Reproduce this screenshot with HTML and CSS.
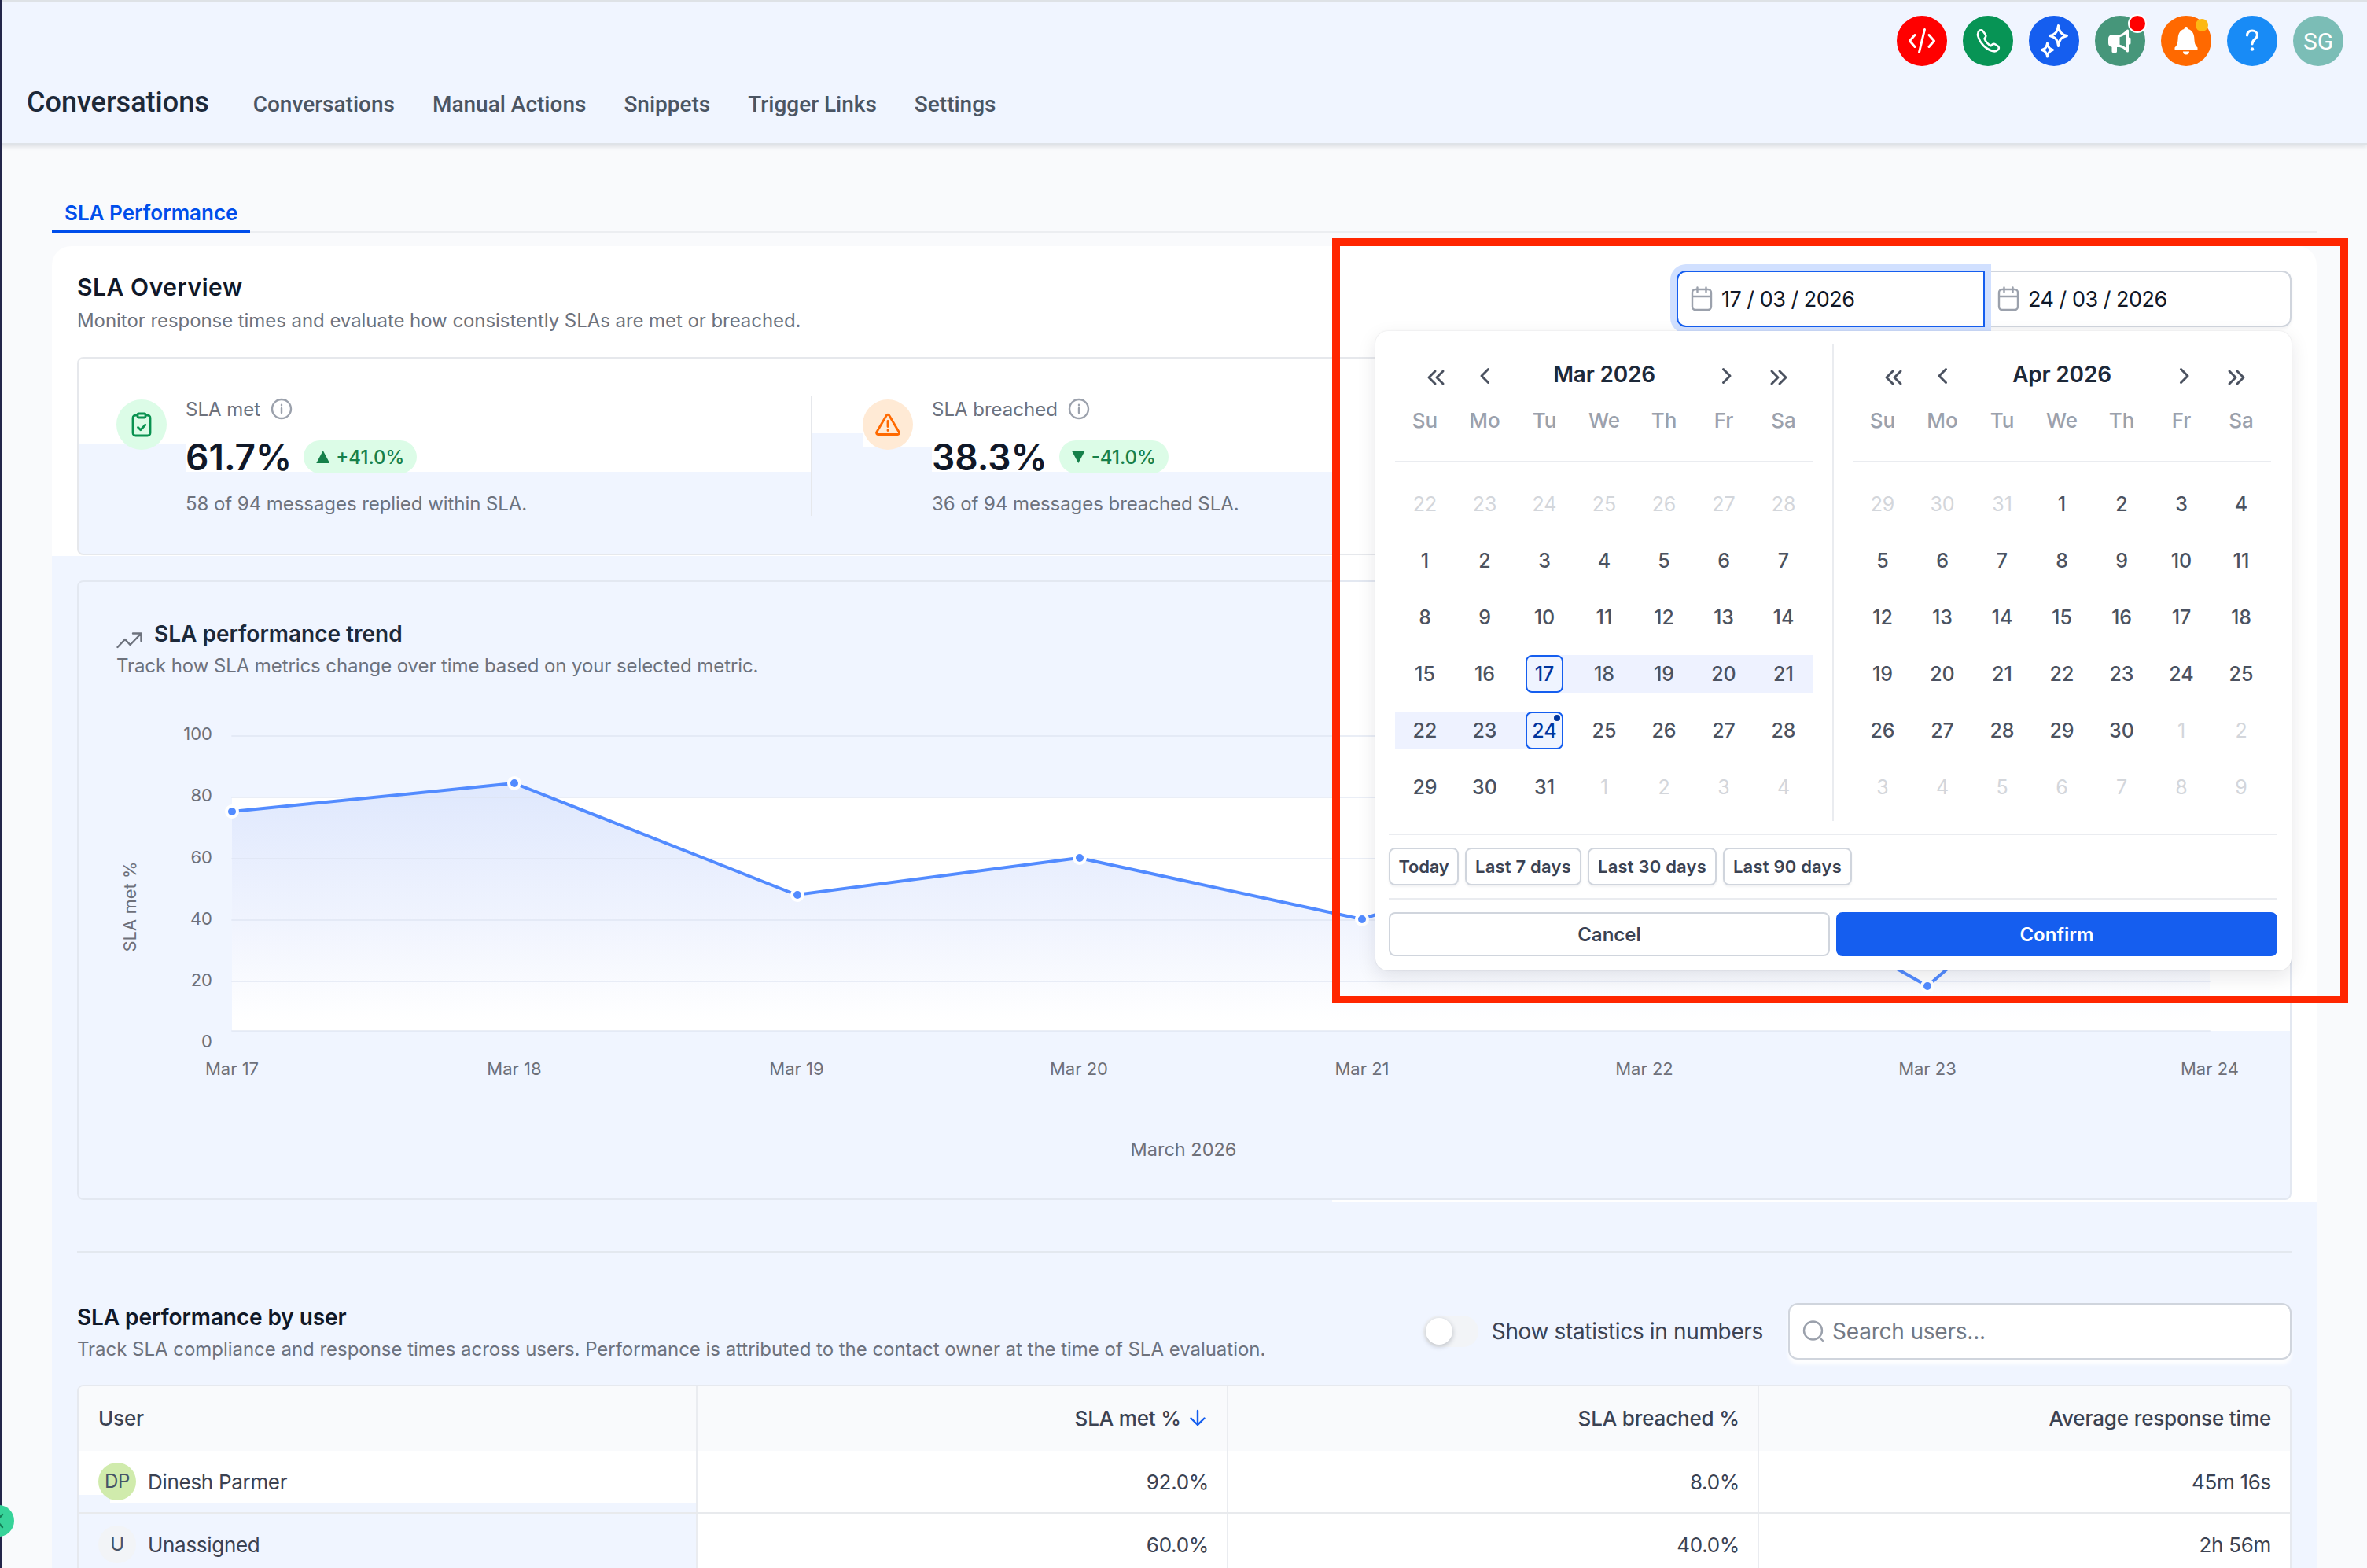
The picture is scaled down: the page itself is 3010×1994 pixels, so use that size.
FILE: index.html
```html
<!DOCTYPE html>
<html lang="en">
<head>
    <meta charset="UTF-8">
    <meta name="viewport" content="width=device-width, initial-scale=1.0">
    <title>Conversations - SLA Performance</title>
    <link rel="stylesheet" href="styles.css">
</head>
<body>
    <header class="header">
        <div class="topbar">
            <span class="round red">
                <svg width="36" height="36" viewBox="0 0 36 36"><path d="M9 10.500L2.500 18l6.500 7.500M27 10.500l6.500 7.500-6.500 7.500M21.500 3.500l-7 29"/></svg>
            </span>
            <span class="round green">
                <svg width="32" height="32" viewBox="0 0 32 32"><path d="M9.500 3.500c-1-1.500-3-1.800-4.500-.5-2 1.700-2.500 4-1.500 7.500 2.500 8.500 9.500 16 18.500 18.500 3 .8 5.500 0 7-2 1.300-1.500 1-3.300-.5-4.500l-3-2c-1.500-1-3-.8-4.200.3l-1.600 1.500c-4-2-6.500-5-8.200-9l1-1.500c1-1.200 1-2.600.2-4z" stroke-width="2.600"/></svg>
            </span>
            <span class="round blue">
                <svg width="38" height="44" viewBox="0 0 38 44"><path d="M24.500 2.500c1 8 4 11.500 11 13-7 1.500-10 5-11 13-1-8-4-11.500-11-13 7-1.500 10-5 11-13zM10.500 25c.7 5 2.800 7.500 7 8.500-4.200 1-6.300 3.500-7 8.500-.7-5-2.800-7.500-7-8.500 4.200-1 6.300-3.500 7-8.500z"/></svg>
            </span>
            <span class="round teal">
                <svg width="32" height="32" viewBox="0 0 32 32"><path d="M6 9.500h8v13h-3.500v7H7v-7H6a3.500 3.500 0 0 1-3.500-3.500v-6A3.500 3.500 0 0 1 6 9.500z" fill="#fff"/><path d="M14 10c5-1 8.500-3.500 11.500-7v26c-3-4-6.500-6-11.500-7M28 13v6"/></svg>
                <i class="badge badge-red"></i>
            </span>
            <span class="round orange">
                <svg width="34" height="40" viewBox="0 0 34 40"><path class="solid" d="M17 2a2.500 2.500 0 0 1 2.500 3c5 1.300 7.500 5.500 7.800 11 .3 6 .8 9.500 4.200 12.500V31h-29v-2.500c3.400-3 3.900-6.500 4.200-12.500.3-5.500 2.800-9.700 7.800-11A2.500 2.500 0 0 1 17 2zM13 33.500h8a4 4 0 0 1-8 0z"/></svg>
                <i class="badge badge-yellow"></i>
            </span>
            <span class="round sky">
                <svg width="24" height="32" viewBox="0 0 24 32"><path d="M5.500 9c.3-3.800 2.900-6 6.500-6s6.500 2.300 6.500 5.800c0 5-6.500 5-6.500 11" stroke-width="3.200"/><circle class="solid" cx="12" cy="26.500" r="2.200"/></svg>
            </span>
            <span class="round avatar">SG</span>
        </div>
        <nav class="nav">
            <h1>Conversations</h1>
            <a>Conversations</a>
            <a>Manual Actions</a>
            <a>Snippets</a>
            <a>Trigger Links</a>
            <a>Settings</a>
        </nav>
    </header>

    <main class="main">
        <div class="tabs"><span class="tab">SLA Performance</span></div>

        <section class="panel">
            <div class="overview-head">
                <div>
                    <h2>SLA Overview</h2>
                    <p class="desc">Monitor response times and evaluate how consistently SLAs are met or breached.</p>
                </div>
                <div class="date-range">
                    <div class="date-input focused">
                        <svg width="28" height="32" viewBox="0 0 28 32"><path d="M2 13h24M8.500 1.500v6M19.500 1.500v6M6 4h16a4 4 0 0 1 4 4v18a4 4 0 0 1-4 4H6a4 4 0 0 1-4-4V8a4 4 0 0 1 4-4z"/></svg>
                        <span>17 / 03 / 2026</span>
                    </div>
                    <div class="date-input">
                        <svg width="28" height="32" viewBox="0 0 28 32"><path d="M2 13h24M8.500 1.500v6M19.500 1.500v6M6 4h16a4 4 0 0 1 4 4v18a4 4 0 0 1-4 4H6a4 4 0 0 1-4-4V8a4 4 0 0 1 4-4z"/></svg>
                        <span>24 / 03 / 2026</span>
                    </div>
                </div>
            </div>

            <div class="stats">
                <div class="stat">
                    <span class="stat-icon met">
                        <svg width="28" height="32" viewBox="0 0 28 32"><path d="M9 4H6.500A3.500 3.500 0 0 0 3 7.500v19A3.500 3.500 0 0 0 6.500 30h15a3.500 3.500 0 0 0 3.500-3.500v-19A3.500 3.500 0 0 0 21.500 4H19M10.500 2h7A1.500 1.500 0 0 1 19 3.500v2A1.500 1.500 0 0 1 17.500 7h-7A1.500 1.500 0 0 1 9 5.500v-2A1.500 1.500 0 0 1 10.500 2zM9.500 19.500l3.300 3.300 6-6.600"/></svg>
                    </span>
                    <div class="stat-body">
                        <div class="stat-label">SLA met <svg class="info" width="28" height="28" viewBox="0 0 28 28"><circle cx="14" cy="14" r="12"/><path d="M14 13v6M14 8.800v.4"/></svg></div>
                        <div class="stat-value">61.7% <span class="pill"><i class="up"></i>+41.0%</span></div>
                        <div class="desc">58 of 94 messages replied within SLA.</div>
                    </div>
                </div>
                <div class="stat breached-stat">
                    <span class="stat-icon breached">
                        <svg width="34" height="32" viewBox="0 0 34 32"><path d="M15.300 4.200L2.800 25.500A2 2 0 0 0 4.500 28.500h25a2 2 0 0 0 1.700-3L18.700 4.200a2 2 0 0 0-3.400 0zM17 11.500v7M17 23v.5"/></svg>
                    </span>
                    <div class="stat-body">
                        <div class="stat-label">SLA breached <svg class="info" width="28" height="28" viewBox="0 0 28 28"><circle cx="14" cy="14" r="12"/><path d="M14 13v6M14 8.800v.4"/></svg></div>
                        <div class="stat-value">38.3% <span class="pill"><i class="down"></i>-41.0%</span></div>
                        <div class="desc">36 of 94 messages breached SLA.</div>
                    </div>
                </div>
            </div>

            <div class="chart-card">
                <div class="chart-title">
                    <svg width="34" height="22" viewBox="0 0 34 22"><path d="M1.500 20L11 10l6.500 7L31 3M21 2.500h10.500V12"/></svg>
                    <h3>SLA performance trend</h3>
                </div>
                <p class="desc">Track how SLA metrics change over time based on your selected metric.</p>
                <svg class="chart" width="2812" height="659" viewBox="100 865 2812 659">
                    <defs>
                        <linearGradient id="area" x1="0" y1="996" x2="0" y2="1300" gradientUnits="userSpaceOnUse">
                            <stop offset="0" stop-color="#dfe8fd"/>
                            <stop offset="0.55" stop-color="#eff3fe"/>
                            <stop offset="1" stop-color="#ffffff"/>
                        </linearGradient>
                    </defs>
                    <rect class="plot-bg" x="295" y="1014" width="2617" height="297"/>
                    <path fill="url(#area)" d="M295 1032L654 996L1013 1138L1372 1091L1732 1169L2091 1049L2451 1254L2810 942V1311H295z"/>
                    <path class="grid" d="M295 936H2810M295 1014H2810M295 1092H2810M295 1170H2810M295 1248H2810M295 1311H2810"/>
                    <path class="line" d="M295 1032L654 996L1013 1138L1372 1091L1732 1169L2091 1049L2451 1254L2810 942"/>
                    <g class="points">
                        <circle cx="295" cy="1032" r="7"/>
                        <circle cx="654" cy="996" r="7"/>
                        <circle cx="1014" cy="1138" r="7"/>
                        <circle cx="1373" cy="1091" r="7"/>
                        <circle cx="1732" cy="1169" r="7"/>
                        <circle cx="2091" cy="1049" r="7"/>
                        <circle cx="2451" cy="1254" r="7"/>
                    </g>
                    <g class="ylabels">
                        <text x="270" y="941">100</text>
                        <text x="270" y="1019">80</text>
                        <text x="270" y="1098">60</text>
                        <text x="270" y="1176">40</text>
                        <text x="270" y="1254">20</text>
                        <text x="270" y="1332">0</text>
                    </g>
                    <g class="xlabels">
                        <text x="295" y="1367">Mar 17</text>
                        <text x="654" y="1367">Mar 18</text>
                        <text x="1013" y="1367">Mar 19</text>
                        <text x="1372" y="1367">Mar 20</text>
                        <text x="1732" y="1367">Mar 21</text>
                        <text x="2091" y="1367">Mar 22</text>
                        <text x="2451" y="1367">Mar 23</text>
                        <text x="2810" y="1367">Mar 24</text>
                        <text class="axis-title" x="1505" y="1470">March 2026</text>
                        <text transform="translate(173 1153) rotate(-90)">SLA met %</text>
                    </g>
                </svg>
            </div>

            <hr class="divider">

            <div class="users-head">
                <div>
                    <h3>SLA performance by user</h3>
                    <p class="desc">Track SLA compliance and response times across users. Performance is attributed to the contact owner at the time of SLA evaluation.</p>
                </div>
                <div class="users-tools">
                    <span class="toggle"></span>
                    <span class="toggle-label">Show statistics in numbers</span>
                    <div class="search">
                        <svg width="28" height="28" viewBox="0 0 28 28"><circle cx="13.500" cy="13" r="11.500"/><path d="M21.500 21.500l4.500 4.500"/></svg>
                        <span>Search users...</span>
                    </div>
                </div>
            </div>

            <div class="table">
                <div class="row head">
                    <div>User</div>
                    <div>SLA met % <svg width="22" height="22" viewBox="0 0 22 22"><path d="M11 2v18M2.500 11.500L11 20l8.500-8.500"/></svg></div>
                    <div>SLA breached %</div>
                    <div>Average response time</div>
                </div>
                <div class="row first">
                    <div><span class="user-avatar dp">DP</span>Dinesh Parmer</div>
                    <div>92.0%</div>
                    <div>8.0%</div>
                    <div>45m 16s</div>
                </div>
                <div class="row second">
                    <div><span class="user-avatar">U</span>Unassigned</div>
                    <div>60.0%</div>
                    <div>40.0%</div>
                    <div>2h 56m</div>
                </div>
            </div>
        </section>
    </main>

    <div class="picker">
        <div class="months">
            <div class="month" data-title="Mar 2026" data-prev="22-28" data-days="31" data-next="4"></div>
            <div class="month" data-title="Apr 2026" data-prev="29-31" data-days="30" data-next="9"></div>
        </div>
        <div class="shortcuts">
            <span class="today">Today</span>
            <span class="week">Last 7 days</span>
            <span>Last 30 days</span>
            <span>Last 90 days</span>
        </div>
        <div class="actions">
            <span class="cancel">Cancel</span>
            <span class="confirm">Confirm</span>
        </div>
    </div>

    <div class="highlight"></div>
    <div class="side-line"></div>
    <div class="side-handle"><svg width="8" height="24" viewBox="0 0 8 24"><path d="M-4 12l7-8M-4 12l7 8"/></svg></div>

    <script>
        const weekdays = ['Su', 'Mo', 'Tu', 'We', 'Th', 'Fr', 'Sa'];

        function icon(cls, d) {
            return `<svg class="${cls}" width="28" height="24" viewBox="0 0 28 24"><path d="${d}"/></svg>`;
        }

        function dayCell(day, cls) {
            return `<div class="day ${cls}"><span>${day}</span></div>`;
        }

        document.querySelectorAll('.month').forEach((month, index) => {
            const data = month.dataset;
            const [from, to] = data.prev.split('-').map(Number);
            let days = '';

            for (let d = from; d <= to; d++) days += dayCell(d, 'muted');
            for (let d = 1; d <= Number(data.days); d++) {
                let cls = '';
                if (index === 0) {
                    if (d === 17) cls = 'start';
                    if (d === 24) cls = 'end';
                    if (d > 17 && d < 24) cls = 'in-range';
                }
                days += dayCell(d, cls);
            }
            for (let d = 1; d <= Number(data.next); d++) days += dayCell(d, 'muted');

            month.innerHTML = `
                <div class="month-head">
                    ${icon('fast-prev', 'M13 4l-8 8 8 8M23 4l-8 8 8 8')}
                    ${icon('prev', 'M18.500 3.500L10 12l8.500 8.500')}
                    <b>${data.title}</b>
                    ${icon('next', 'M9.500 3.500L18 12l-8.500 8.500')}
                    ${icon('fast-next', 'M5 4l8 8-8 8M15 4l8 8-8 8')}
                </div>
                <div class="weekdays">${weekdays.map(w => `<span>${w}</span>`).join('')}</div>
                <div class="days">${days}</div>
            `;
        });
    </script>
</body>
</html>
```
FILE: styles.css
```css
:root {
    --tint: #f0f5ff;
    --page: #f9fafc;
    --border: #e6e8ec;
    --text: #101828;
    --text-mid: #3b4252;
    --text-light: #6d727d;
    --icon: #9ba1ac;
    --primary: #155eef;
    --success: #16804a;
}
* {
    box-sizing: border-box;
}
body {
    margin: 0;
    height: 1994px;
    overflow: hidden;
    position: relative;
    background: var(--page);
    color: var(--text);
    font-family: Inter, "Liberation Sans", sans-serif;
    font-size: 26px;
}
h1, h2, h3, p {
    margin: 0;
}
svg {
    display: block;
    flex: none;
    fill: none;
    stroke: currentColor;
    stroke-width: 2.4;
    stroke-linecap: round;
    stroke-linejoin: round;
}

/* header */
.header {
    height: 184px;
    background: var(--tint);
    border-top: 2px solid #dee2e6;
    border-bottom: 2px solid #dfe3e8;
    box-shadow: 0 2px 6px rgba(16, 24, 40, 0.14);
    font-family: Roboto, "Liberation Sans", sans-serif;
}
.topbar {
    display: flex;
    justify-content: flex-end;
    gap: 20px;
    padding: 18px 30px 0 0;
}
.round {
    position: relative;
    width: 64px;
    height: 64px;
    border-radius: 50%;
    display: flex;
    align-items: center;
    justify-content: center;
    color: #fff;
}
.round svg {
    stroke-width: 3;
}
.round .solid {
    fill: #fff;
    stroke: none;
}
.red { background: #ff0000; }
.green { background: #079455; }
.blue { background: #155eef; }
.teal { background: #46967a; }
.orange { background: #ff6900; }
.sky { background: #188bf6; }
.avatar {
    background: #7bbdb6;
    font-size: 30px;
}
.badge {
    position: absolute;
    border-radius: 50%;
}
.badge-red {
    top: -2px;
    right: -2px;
    width: 24px;
    height: 24px;
    background: #ff0000;
    border: 2px solid #fff;
}
.badge-yellow {
    top: 4px;
    right: 4px;
    width: 16px;
    height: 16px;
    background: #fdb913;
}
.nav {
    display: flex;
    gap: 48px;
    padding: 22px 0 0 34px;
    line-height: 48px;
}
.nav h1 {
    margin-right: 8px;
    font-size: 36px;
    font-weight: 500;
    color: #1d2939;
}
.nav a {
    padding-top: 3px;
    font-size: 28px;
    font-weight: 500;
    color: #4b5563;
}

/* page */
.main {
    padding: 64px 64px 0 66px;
}
.tabs {
    height: 48px;
    border-bottom: 2px solid #eceef1;
}
.tab {
    display: inline-block;
    height: 48px;
    padding: 0 16px;
    line-height: 45px;
    border-bottom: 3px solid #004eeb;
    color: #004eeb;
    font-weight: 600;
}
.panel {
    height: 1700px;
    margin-top: 17px;
    padding: 31px 32px 0;
    border-radius: 24px 24px 0 0;
    background:
        linear-gradient(var(--tint), var(--tint)) 0 394px / 1628px 821px no-repeat,
        linear-gradient(var(--tint), var(--tint)) 0 1215px / 100% 500px no-repeat,
        #fff;
}
.desc {
    font-size: 24px;
    letter-spacing: -0.06px;
    color: var(--text-light);
}
h2 {
    font-size: 30px;
    font-weight: 600;
    line-height: 42px;
    letter-spacing: 0.55px;
}
h3 {
    font-size: 28px;
    font-weight: 600;
    line-height: 40px;
}
.overview-head {
    display: flex;
    justify-content: space-between;
    height: 110px;
}
.overview-head .desc {
    line-height: 44px;
}
.date-range {
    display: flex;
    width: 782px;
}
.date-input {
    flex: 1;
    height: 72px;
    display: flex;
    align-items: center;
    gap: 11px;
    padding-left: 16px;
    background: #fff;
    border: 2px solid #d0d5dd;
    border-left: 0;
    border-radius: 0 12px 12px 0;
    box-shadow: 0 2px 4px rgba(16, 24, 40, 0.05);
    font-size: 27px;
    letter-spacing: -0.5px;
}
.date-input svg {
    color: var(--icon);
}
.date-input.focused {
    flex: none;
    width: 392px;
    border: 2px solid var(--primary);
    border-radius: 12px 0 0 12px;
    box-shadow: 0 0 0 8px #d1e0ff;
    z-index: 1;
}

/* stats */
.stats {
    display: flex;
    height: 252px;
    padding: 48px 0;
    border: 2px solid var(--border);
    border-radius: 8px;
    background:
        linear-gradient(var(--tint), var(--tint)) 0 109px / 136px 40px no-repeat,
        linear-gradient(var(--tint), var(--tint)) 933px 95px / 64px 60px no-repeat,
        linear-gradient(var(--tint), var(--tint)) 997px 112px / 88px 40px no-repeat,
        linear-gradient(var(--tint), var(--tint)) 0 144px / 1594px 104px no-repeat,
        #fff;
}
.stat {
    display: flex;
    gap: 24px;
    width: 933px;
    padding-left: 48px;
    border-right: 2px solid var(--border);
}
.breached-stat {
    padding-left: 64px;
    border: 0;
}
.stat-icon {
    width: 64px;
    height: 64px;
    margin-top: 4px;
    border-radius: 50%;
    display: flex;
    align-items: center;
    justify-content: center;
}
.met {
    background: #dcfce7;
    color: #099250;
}
.breached {
    background: #ffead5;
    color: #ff6900;
}
.stat-icon svg {
    stroke-width: 2.8;
}
.stat-label {
    display: flex;
    align-items: center;
    gap: 13px;
    height: 32px;
    font-size: 24px;
    color: var(--text-light);
}
.info {
    color: var(--icon);
}
.stat-value {
    display: flex;
    align-items: center;
    gap: 15px;
    height: 56px;
    margin: 17px 0 16px;
    font-size: 46px;
    font-weight: 600;
}
.pill {
    display: flex;
    align-items: center;
    gap: 8px;
    height: 42px;
    padding: 0 16px;
    border-radius: 21px;
    background: #dcfce7;
    color: var(--success);
    font-size: 24px;
    font-weight: 500;
}
.pill i {
    width: 17px;
    height: 16px;
    background: var(--success);
}
.up {
    clip-path: polygon(50% 0, 100% 100%, 0 100%);
}
.down {
    clip-path: polygon(0 0, 100% 0, 50% 100%);
}
.stat .desc {
    line-height: 32px;
}

/* chart */
.chart-card {
    height: 788px;
    margin-top: 32px;
    padding-top: 46px;
    border: 2px solid #e3e8f1;
    border-radius: 8px;
    background:
        linear-gradient(#fff, #fff) 1594px 0 / 1300px 571px no-repeat,
        var(--tint);
}
.chart-title {
    display: flex;
    gap: 14px;
    padding-left: 48px;
}
.chart-title svg {
    margin-top: 17px;
    color: var(--text-light);
}
.chart-title h3 {
    color: #1d2939;
}
.chart-card .desc {
    padding: 2px 0 0 48px;
    line-height: 38px;
    letter-spacing: -0.09px;
    margin-bottom: -1px;
}
.plot-bg {
    fill: #fff;
    stroke: none;
}
.chart path[fill] {
    stroke: none;
}
.grid {
    stroke: #dce2f0;
    stroke-opacity: 0.6;
    stroke-width: 2;
}
.line {
    stroke: #528bff;
    stroke-width: 4;
}
.points circle {
    fill: #528bff;
    stroke: #fff;
    stroke-width: 4;
}
.chart text {
    fill: #6e7079;
    stroke: none;
    font-size: 22px;
}
.chart .axis-title {
    font-size: 23.5px;
}
.ylabels {
    text-anchor: end;
}
.xlabels {
    text-anchor: middle;
}

/* users */
.divider {
    height: 2px;
    margin: 65px 0 62px;
    border: 0;
    background: #e3e8ef;
}
.users-head {
    display: flex;
    justify-content: space-between;
    height: 106px;
}
.users-head h3 {
    letter-spacing: -0.1px;
}
.users-head .desc {
    line-height: 42px;
    letter-spacing: -0.03px;
}
.users-tools {
    display: flex;
    align-items: center;
    height: 72px;
    margin-top: 2px;
    color: var(--text-mid);
    font-size: 28px;
    letter-spacing: -0.35px;
}
.toggle {
    width: 70px;
    height: 40px;
    padding: 3px;
    border-radius: 20px;
    background: #f2f4f7;
}
.toggle::before {
    content: "";
    display: block;
    width: 34px;
    height: 34px;
    border-radius: 50%;
    background: #fff;
    box-shadow: 0 2px 6px rgba(16, 24, 40, 0.25);
}
.toggle-label {
    margin: 0 32px 0 17px;
}
.search {
    display: flex;
    align-items: center;
    gap: 10px;
    width: 640px;
    height: 72px;
    padding-left: 16px;
    background: #fff;
    border: 2px solid #d0d5dd;
    border-radius: 12px;
    box-shadow: 0 6px 4px rgba(255, 255, 255, 0.9);
    color: #737984;
    letter-spacing: -0.2px;
}
.search svg {
    color: var(--icon);
}
.table {
    border: 2px solid #e6e9ef;
    border-radius: 8px 8px 0 0;
    overflow: hidden;
    color: var(--text-mid);
}
.row {
    display: grid;
    grid-template-columns: 787px 675px 675px 1fr;
    height: 80px;
    background: #fff;
    border-bottom: 2px solid #e8eaed;
    letter-spacing: -0.3px;
}
.row > div {
    display: flex;
    align-items: center;
    justify-content: flex-end;
    padding-right: 23px;
    border-right: 2px solid #eaecf0;
}
.row > div:first-child {
    justify-content: flex-start;
    padding-left: 25px;
}
.row > div:last-child {
    padding-right: 24px;
    border: 0;
}
.head {
    height: 82px;
    background: var(--page);
    border: 0;
    font-weight: 500;
    letter-spacing: -0.15px;
}
.head > div {
    padding-bottom: 2px;
}
.head svg {
    margin: 0 3px 0 10px;
    color: var(--primary);
}
.first > div:first-child {
    background:
        linear-gradient(var(--tint), var(--tint)) 0 56px / 40px 30px no-repeat,
        linear-gradient(var(--tint), var(--tint)) 0 66px / 100% 20px no-repeat;
}
.second > div:first-child {
    background: var(--tint);
}
.user-avatar {
    width: 48px;
    height: 48px;
    margin-right: 15px;
    border-radius: 50%;
    background: #f2f4f7;
    color: #475467;
    font-size: 24px;
    line-height: 48px;
    text-align: center;
}
.dp {
    background: #d0ebac;
}

/* date picker */
.picker {
    position: absolute;
    left: 1749px;
    top: 421px;
    width: 1165px;
    height: 813px;
    padding: 17px 18px 0 17px;
    background: #fff;
    border-radius: 16px;
    box-shadow: 0 0 2px rgba(16, 24, 40, 0.12), 0 8px 24px rgba(16, 24, 40, 0.1);
    z-index: 2;
}
.months {
    display: flex;
    height: 606px;
}
.month {
    width: 566px;
    padding: 8px 24px 0 8px;
    border-right: 2px solid #eaecf0;
}
.month + .month {
    padding: 8px 0 0 24px;
    width: 556px;
    border: 0;
}
.month-head, .weekdays, .days {
    display: grid;
    grid-template-columns: repeat(7, 76px);
    justify-items: center;
    align-items: center;
}
.month-head {
    height: 60px;
    color: #4b5260;
}
.month-head svg {
    stroke-width: 3;
    margin-top: 4px;
}
.month-head b {
    grid-column: span 3;
    font-size: 28px;
    font-weight: 600;
    color: #1d2939;
    letter-spacing: -0.2px;
}
.month-head .fast-prev {
    margin: 8px 0 0 28px;
}
.month-head .next {
    margin-left: 7px;
}
.month-head .fast-next {
    margin: 8px 12px 0 0;
}
.weekdays {
    height: 82px;
    padding-bottom: 24px;
    border-bottom: 2px solid #eaecf0;
    font-size: 26px;
    font-weight: 500;
    color: var(--icon);
}
.days {
    margin-top: 17px;
}
.day {
    width: 76px;
    height: 72px;
    padding: 12px 0;
    color: #4b5260;
    text-align: center;
    line-height: 48px;
    font-size: 25px;
    font-weight: 500;
}
.day span {
    display: block;
}
.muted {
    color: #d3d6db;
    font-weight: 400;
}
.in-range span {
    background: #eef2ff;
}
.start, .end {
    position: relative;
    padding: 12px 14px;
    color: #00359e;
    background: linear-gradient(#eef2ff, #eef2ff) 38px 12px / 38px 48px no-repeat;
}
.end {
    background-position: 0 12px;
}
.start span, .end span {
    height: 48px;
    line-height: 44px;
    background: #eff4ff;
    border: 2px solid var(--primary);
    border-radius: 8px;
}
.end::after {
    content: "";
    position: absolute;
    top: 16px;
    right: 18px;
    width: 8px;
    height: 8px;
    border-radius: 50%;
    background: #00359e;
}
.shortcuts {
    display: flex;
    gap: 8px;
    margin-top: 16px;
    padding: 16px 0;
    border-top: 2px solid #eaecf0;
    border-bottom: 2px solid #eaecf0;
    font-size: 22px;
    font-weight: 600;
    color: var(--text-mid);
}
.shortcuts span {
    width: 164px;
    height: 48px;
    line-height: 44px;
    border: 2px solid #d0d5dd;
    border-radius: 8px;
    text-align: center;
    white-space: nowrap;
    letter-spacing: 0.2px;
    box-shadow: 0 2px 3px rgba(16, 24, 40, 0.05);
}
.shortcuts .today {
    width: 89px;
    letter-spacing: -0.2px;
}
.shortcuts .week {
    width: 148px;
}
.actions {
    display: flex;
    gap: 8px;
    margin-top: 16px;
    font-size: 24px;
    font-weight: 600;
    line-height: 54px;
    text-align: center;
}
.actions span {
    flex: 1;
    height: 56px;
    border: 2px solid #d0d5dd;
    border-radius: 8px;
    color: var(--text-mid);
}
.actions .confirm {
    background: var(--primary);
    border-color: var(--primary);
    color: #fff;
}

/* overlays */
.highlight {
    position: absolute;
    left: 1694px;
    top: 303px;
    width: 1292px;
    height: 973px;
    border: 10px solid #ff2600;
    z-index: 3;
}
.side-line {
    position: absolute;
    left: 0;
    top: 0;
    width: 2px;
    height: 100%;
    background: #23264a;
}
.side-handle {
    position: absolute;
    left: -22px;
    top: 1914px;
    width: 40px;
    height: 40px;
    padding: 8px 0 0 22px;
    border-radius: 50%;
    background: #37d399;
    color: #157f57;
}
```
